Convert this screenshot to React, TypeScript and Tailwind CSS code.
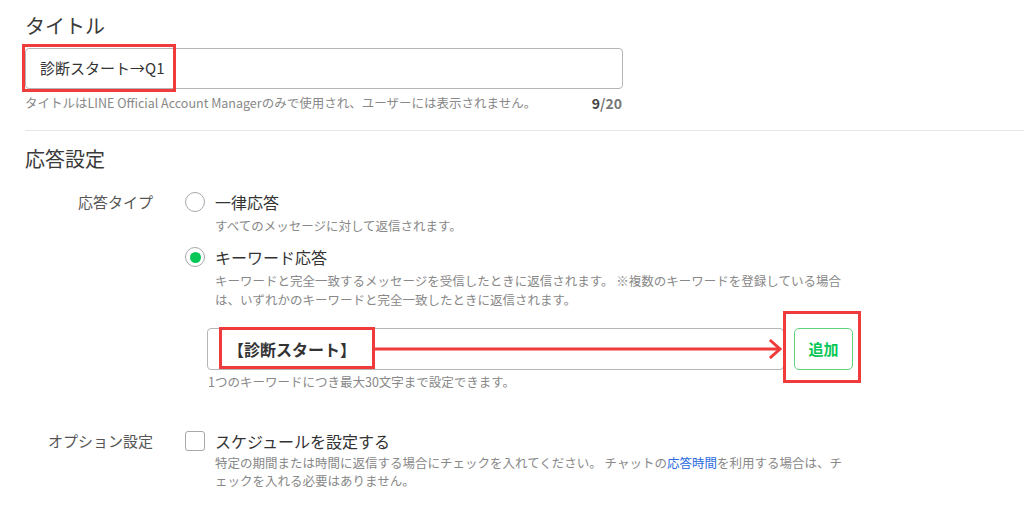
import React from "react";

const RED = "#ef3b3b";

function Radio({ checked }: { checked?: boolean }) {
  return (
    <span className="flex h-[20px] w-[20px] shrink-0 items-center justify-center rounded-full border border-[#a8a8a8] bg-white">
      {checked && <span className="h-[11px] w-[11px] rounded-full bg-[#06c755]" />}
    </span>
  );
}

export default function App() {
  return (
    <div className="min-h-[505px] w-[1024px] overflow-hidden bg-white pl-[25px] pt-[12px] font-['Noto_Sans_CJK_JP',sans-serif] text-[#333]">
      {/* タイトル */}
      <div className="text-[20px] leading-[28px] text-[#3a3a3a]">タイトル</div>
      <div className="relative mt-[8px] w-[598px]">
        <div className="flex h-[41px] items-center rounded-[4px] border border-[#b5b5b5] pl-[14px] text-[15px] text-[#333]">
          診断スタート→Q1
        </div>
        <div
          className="pointer-events-none absolute left-[-3px] top-[-4px] h-[48px] w-[154px] border-[3px]"
          style={{ borderColor: RED }}
        />
      </div>
      <div className="mt-[5px] flex w-[598px] items-center justify-between text-[12.5px] leading-[18px] text-[#888]">
        <span>タイトルはLINE Official Account Managerのみで使用され、ユーザーには表示されません。</span>
        <span className="pr-[1px] text-[14px] font-bold text-[#777]">
          <span className="text-[#444]">9</span>/20
        </span>
      </div>

      <div className="mt-[18px] border-t border-[#e6e6e6]" />

      {/* 応答設定 */}
      <div className="mt-[14px] text-[20px] leading-[28px] text-[#3a3a3a]">応答設定</div>

      <div className="mt-[17px] grid grid-cols-[128px_1fr] gap-x-[32px]">
        {/* 応答タイプ */}
        <div className="text-right text-[15px] leading-[24px] text-[#555]">応答タイプ</div>
        <div>
          <div className="flex h-[24px] items-center gap-[10px]">
            <Radio />
            <span className="text-[16px] leading-[24px] text-[#333]">一律応答</span>
          </div>
          <div className="mt-[3px] pl-[30px] text-[12.5px] leading-[18px] text-[#888]">
            すべてのメッセージに対して返信されます。
          </div>
          <div className="mt-[10px] flex h-[24px] items-center gap-[10px]">
            <Radio checked />
            <span className="text-[16px] leading-[24px] text-[#333]">キーワード応答</span>
          </div>
          <div className="mt-[2px] pl-[30px] text-[12.5px] leading-[19px] text-[#888]">
            キーワードと完全一致するメッセージを受信したときに返信されます。 ※複数のキーワードを登録している場合
            <br />
            は、いずれかのキーワードと完全一致したときに返信されます。
          </div>

          <div className="relative ml-[22px] mt-[19px] flex items-center gap-[10px]">
            <div className="flex h-[42px] w-[577px] items-center rounded-[4px] border border-[#b5b5b5] pl-[20px] text-[16px] font-semibold text-[#333]">
              【診断スタート】
            </div>
            <div className="flex h-[42px] w-[59px] items-center justify-center rounded-[5px] border border-[#5fd27a] bg-white text-[15px] font-bold text-[#06c755]">
              追加
            </div>
            {/* annotations */}
            <div
              className="pointer-events-none absolute left-[12px] top-[-1px] h-[42px] w-[156px] border-[3px]"
              style={{ borderColor: RED }}
            />
            <svg
              className="pointer-events-none absolute left-[168px] top-[11px]"
              width="408"
              height="20"
              viewBox="0 0 408 20"
            >
              <line x1="0" y1="10" x2="405" y2="10" stroke={RED} strokeWidth="3" />
              <polyline points="396,2 405,10 396,18" fill="none" stroke={RED} strokeWidth="3" strokeLinecap="square" />
            </svg>
            <div
              className="pointer-events-none absolute left-[576px] top-[-17px] h-[72px] w-[78px] border-[3px]"
              style={{ borderColor: RED }}
            />
          </div>
          <div className="ml-[23px] mt-[3px] text-[12.5px] leading-[18px] text-[#888]">
            1つのキーワードにつき最大30文字まで設定できます。
          </div>
        </div>

        {/* オプション設定 */}
        <div className="mt-[38px] text-right text-[15px] leading-[24px] text-[#555]">オプション設定</div>
        <div className="mt-[38px]">
          <div className="flex h-[24px] items-center gap-[10px]">
            <span className="h-[20px] w-[20px] shrink-0 rounded-[3px] border border-[#a8a8a8] bg-white" />
            <span className="text-[16px] leading-[24px] text-[#333]">スケジュールを設定する</span>
          </div>
          <div className="mt-[1px] pl-[30px] text-[12.5px] leading-[18px] text-[#888]">
            特定の期間または時間に返信する場合にチェックを入れてください。 チャットの
            <span className="text-[#2a6ae0]">応答時間</span>
            を利用する場合は、チ
            <br />
            ェックを入れる必要はありません。
          </div>
        </div>
      </div>
    </div>
  );
}
